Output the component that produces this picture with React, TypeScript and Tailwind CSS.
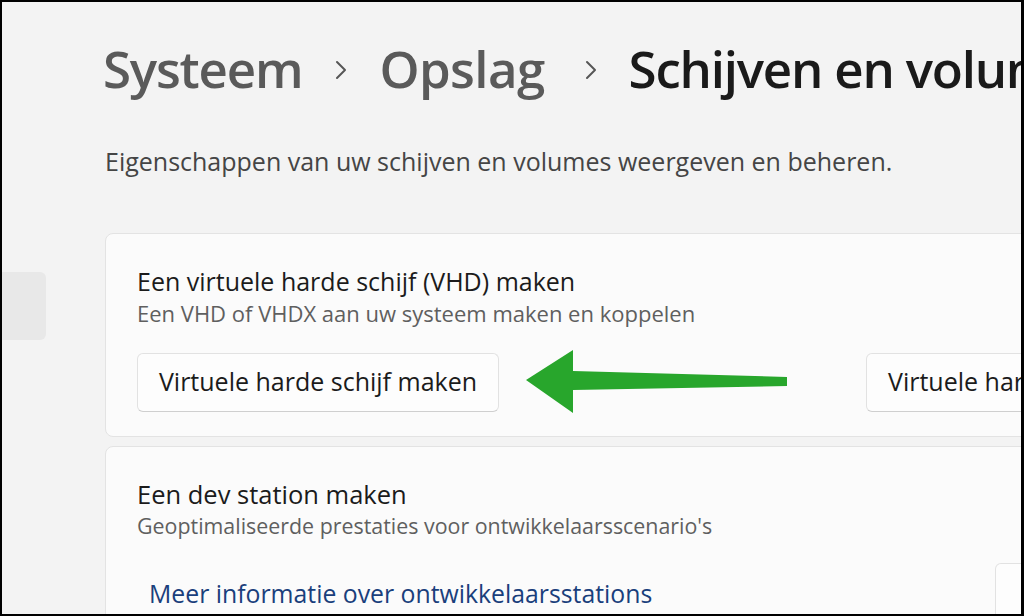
import React from 'react';

const font = { fontFamily: '"Open Sans", "Noto Sans", sans-serif' };

function Chevron() {
  return (
    <svg width="14" height="20" viewBox="0 0 14 20" className="shrink-0">
      <path d="M3 2 L11 10 L3 18" fill="none" stroke="#555555" strokeWidth="2" strokeLinecap="round" strokeLinejoin="round" />
    </svg>
  );
}

function GreenArrow() {
  return (
    <svg width="262" height="66" viewBox="0 0 262 66" className="shrink-0">
      <polygon points="0,31 47,1 47,22 261,28 261,37 47,41 47,64" fill="#28a62c" />
    </svg>
  );
}

export default function App() {
  return (
    <div className="w-[1024px] h-[616px] overflow-hidden bg-black pt-[2px] pl-[2px] pr-[3px] pb-[2px]" style={font}>
      <div className="flex h-full w-full overflow-hidden bg-[#f3f3f3]">
        {/* Sidebar */}
        <div className="w-[101px] shrink-0 pt-[270px]">
          <div className="h-[68px] w-[44px] rounded-r-[6px] bg-[#e8e8e8]" />
        </div>

        {/* Main */}
        <div className="flex min-w-0 flex-1 flex-col">
          <div className="flex items-center whitespace-nowrap pt-[28px] text-[51px] font-semibold leading-[76px] tracking-[-1.2px]">
            <span className="shrink-0 text-[#5a5a5a]">Systeem</span>
            <span className="ml-[32px] mr-[31px] mt-[4px] flex"><Chevron /></span>
            <span className="shrink-0 tracking-[-0.6px] text-[#5a5a5a]">Opslag</span>
            <span className="ml-[39px] mr-[31px] mt-[4px] flex"><Chevron /></span>
            <span className="shrink-0 text-[#1a1a1a]">Schijven en volumes</span>
          </div>

          <p className="mt-[40px] pl-[2px] text-[25px] leading-[30px] text-[#454545] whitespace-nowrap">
            Eigenschappen van uw schijven en volumes weergeven en beheren.
          </p>

          <div className="mt-[57px] flex w-[1000px] flex-col gap-[9px] pl-[2px]">
            {/* Card 1 */}
            <div className="h-[204px] shrink-0 rounded-[8px] border border-[#e3e3e3] bg-[#fbfbfb] pl-[31px] pt-[31px]">
              <div className="text-[25px] leading-[32px] text-[#1b1b1b] whitespace-nowrap">
                Een virtuele harde schijf (VHD) maken
              </div>
              <div className="mt-[2px] text-[22px] leading-[28px] text-[#5f5f5f] whitespace-nowrap">
                Een VHD of VHDX aan uw systeem maken en koppelen
              </div>
              <div className="mt-[22px] flex items-center">
                <button className="h-[59px] w-[362px] shrink-0 rounded-[6px] border border-[#e2e2e2] border-b-[#cfcfcf] bg-[#fdfdfd] text-[25px] text-[#1b1b1b] whitespace-nowrap">
                  Virtuele harde schijf maken
                </button>
                <div className="ml-[27px] flex shrink-0">
                  <GreenArrow />
                </div>
                <button className="ml-[78px] h-[59px] w-[340px] shrink-0 rounded-[6px] border border-[#e2e2e2] border-b-[#cfcfcf] bg-[#fdfdfd] pl-[21px] text-left text-[25px] text-[#1b1b1b] whitespace-nowrap">
                  Virtuele harde schijf koppelen
                </button>
              </div>
            </div>

            {/* Card 2 */}
            <div className="h-[200px] shrink-0 rounded-[8px] border border-[#e3e3e3] bg-[#fbfbfb] pl-[31px] pt-[31px]">
              <div className="text-[25.5px] leading-[32px] text-[#1b1b1b] whitespace-nowrap">
                Een dev station maken
              </div>
              <div className="mt-[2px] text-[21.4px] leading-[28px] text-[#5f5f5f] whitespace-nowrap">
                Geoptimaliseerde prestaties voor ontwikkelaarsscenario's
              </div>
              <div className="mt-[23px] flex items-center">
                <a className="shrink-0 pl-[12px] text-[24.8px] leading-[32px] text-[#1a3f7c] whitespace-nowrap">
                  Meer informatie over ontwikkelaarsstations
                </a>
                <div className="ml-[343px] h-[59px] w-[120px] shrink-0 rounded-[6px] border border-[#e2e2e2] border-b-[#cfcfcf] bg-[#fdfdfd]" />
              </div>
            </div>
          </div>
        </div>
      </div>
    </div>
  );
}
